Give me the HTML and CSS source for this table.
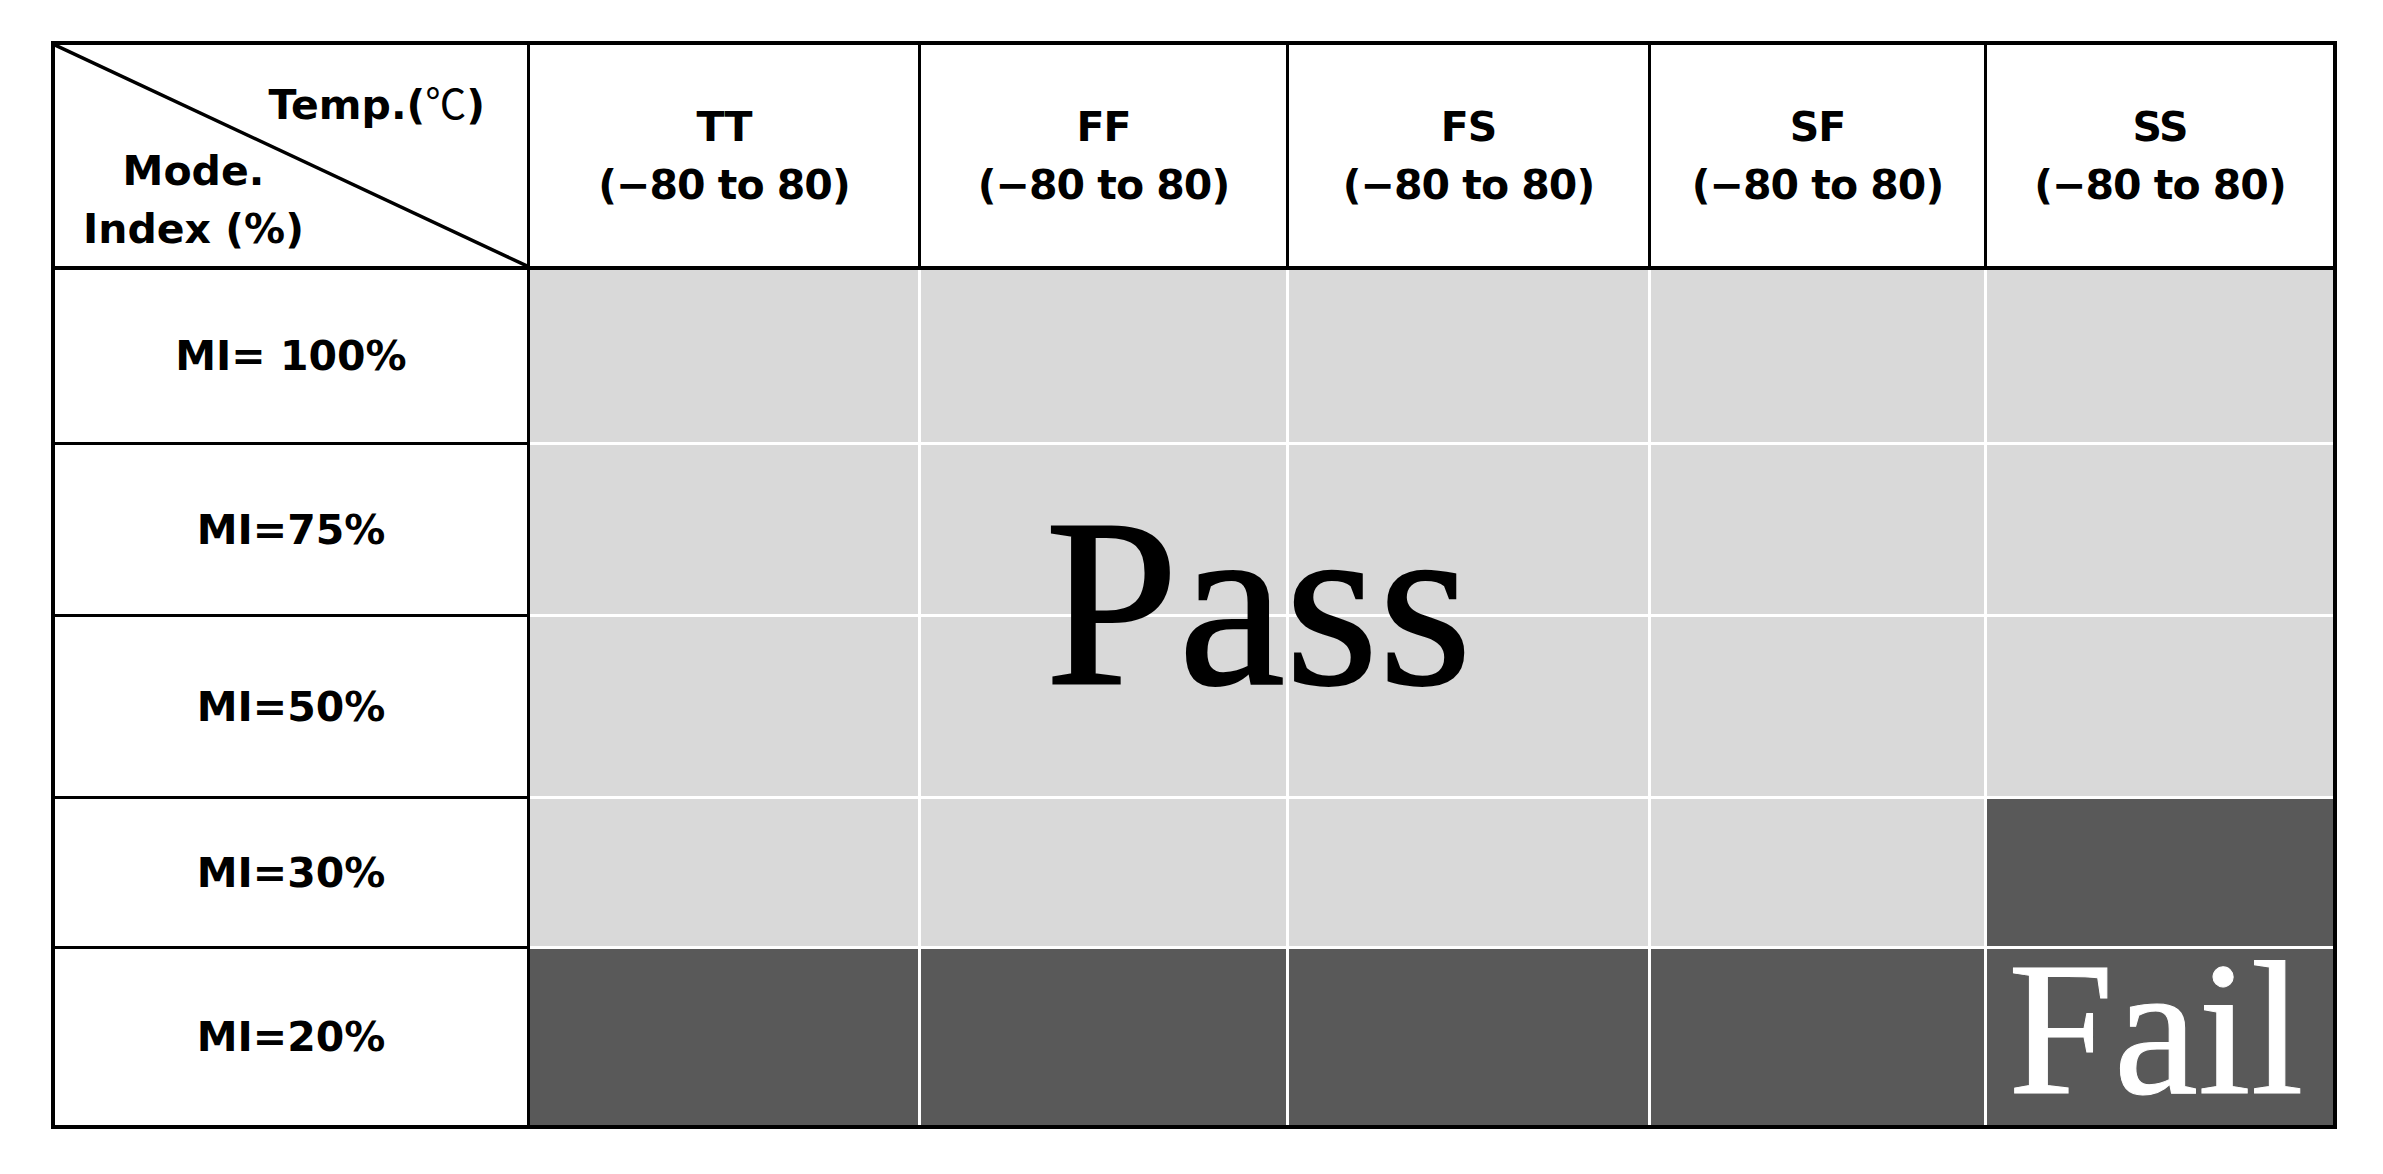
FILE: index.html
```html
<html>
<head>
<title>Mode Index vs Temperature</title>
<link rel="stylesheet" href="styles.css">
</head>
<body>
<div class="matrix">
<div class="cell corner">
<svg class="slash" viewBox="0 0 100 100" preserveAspectRatio="none"><line x1="0" y1="0" x2="100" y2="100" stroke="#000" stroke-width="3.5" vector-effect="non-scaling-stroke"/></svg>
<div class="corner-temp">Temp.(<span class="deg">℃</span>)</div>
<div class="corner-mode">Mode.<br>Index (%)</div>
</div>
<div class="cell head">TT<br>(−80 to 80)</div>
<div class="cell head">FF<br>(−80 to 80)</div>
<div class="cell head">FS<br>(−80 to 80)</div>
<div class="cell head">SF<br>(−80 to 80)</div>
<div class="cell head">SS<br>(−80 to 80)</div>

<div class="cell label">MI= 100%</div>
<div class="cell ok"></div>
<div class="cell ok"></div>
<div class="cell ok"></div>
<div class="cell ok"></div>
<div class="cell ok"></div>

<div class="cell label">MI=75%</div>
<div class="cell ok"></div>
<div class="cell ok"></div>
<div class="cell ok"></div>
<div class="cell ok"></div>
<div class="cell ok"></div>

<div class="cell label">MI=50%</div>
<div class="cell ok"></div>
<div class="cell ok"></div>
<div class="cell ok"></div>
<div class="cell ok"></div>
<div class="cell ok"></div>

<div class="cell label">MI=30%</div>
<div class="cell ok"></div>
<div class="cell ok"></div>
<div class="cell ok"></div>
<div class="cell ok"></div>
<div class="cell bad"></div>

<div class="cell label">MI=20%</div>
<div class="cell bad"></div>
<div class="cell bad"></div>
<div class="cell bad"></div>
<div class="cell bad"></div>
<div class="cell bad"></div>

<div class="verdict pass-text">Pass</div>
<div class="verdict fail-text">Fail</div>
</div>
</body>
</html>
```

FILE: styles.css
```css
body {
margin: 0;
background: #fff;
font-family: "DejaVu Sans", Verdana, sans-serif;
color: #000;
}

.matrix {
position: relative;
display: grid;
grid-template-columns: 475px 391px 368px 362px 336px 1fr;
grid-template-rows: 225px 175px 172px 182px 150px 1fr;
box-sizing: border-box;
width: 2286px;
height: 1088px;
margin: 41px 0 0 51px;
border: 4px solid #000;
}

.cell {
box-sizing: border-box;
display: flex;
align-items: center;
justify-content: center;
text-align: center;
font-size: 41px;
font-weight: bold;
}

.head {
border-right: 3px solid #000;
border-bottom: 4px solid #000;
line-height: 58px;
letter-spacing: -1px;
}

.label {
border-right: 3px solid #000;
border-bottom: 3px solid #000;
}

.ok {
background: #d9d9d9;
border-right: 3px solid #fff;
border-bottom: 3px solid #fff;
}

.bad {
background: #595959;
border-right: 3px solid #fff;
border-bottom: 3px solid #fff;
}

.matrix > .cell:nth-child(6n) {
border-right: none;
}

.matrix > .cell:nth-child(n+31) {
border-bottom: none;
}

/* top-left split header */
.corner {
position: relative;
flex-direction: column;
justify-content: space-between;
align-items: stretch;
padding: 32px 42px 8px 28px;
border-right: 3px solid #000;
border-bottom: 4px solid #000;
}

.slash {
position: absolute;
left: 0;
top: 0;
width: 100%;
height: 100%;
}

.corner-temp {
text-align: right;
line-height: 48px;
}

.corner-temp .deg {
font-family: "Noto Sans CJK JP", sans-serif;
font-weight: normal;
}

.corner-mode {
align-self: flex-start;
text-align: center;
line-height: 58px;
}

.verdict {
position: absolute;
font-family: "Liberation Serif", "Times New Roman", serif;
font-weight: normal;
line-height: 1;
}

.pass-text {
left: 990px;
top: 438px;
font-size: 240px;
color: #000;
-webkit-text-stroke: 2px #000;
}

.fail-text {
left: 1953px;
top: 889px;
font-size: 190px;
color: #fff;
-webkit-text-stroke: 1px #fff;
}
```
